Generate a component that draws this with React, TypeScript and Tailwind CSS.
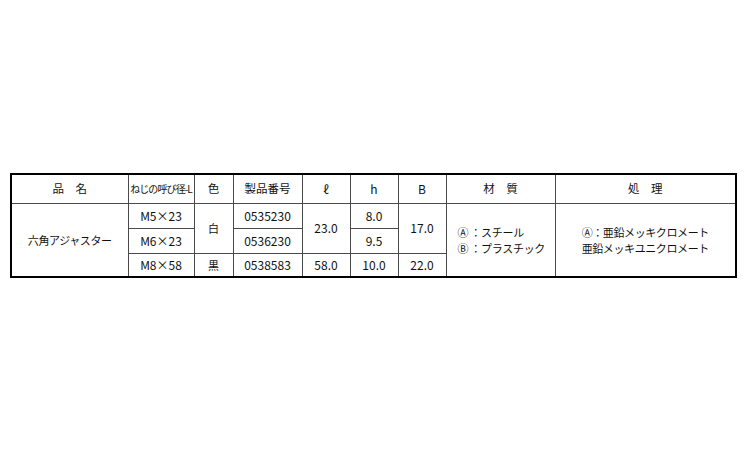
const font = { fontFamily: '"Noto Sans CJK JP", "Noto Sans", sans-serif' };

const cell = "border border-[#4a4a4a] text-center align-middle p-0 font-normal";
const num = `${cell} text-[12px]`;
const jp = `${cell} text-[11px]`;

export default function App() {
  return (
    <div className="min-h-[450px] w-[750px] bg-white pt-[173px] pl-[10px] text-[#111]" style={font}>
      <table className="table-fixed border-collapse border-2 border-black w-[727px]">
        <colgroup>
          <col className="w-[117px]" />
          <col className="w-[66px]" />
          <col className="w-[39px]" />
          <col className="w-[69px]" />
          <col className="w-[48px]" />
          <col className="w-[48px]" />
          <col className="w-[48px]" />
          <col className="w-[109px]" />
          <col className="w-[181px]" />
        </colgroup>
        <thead>
          <tr className="h-[29px]">
            <th className={`${cell} text-[11.5px]`}>品　名</th>
            <th className={`${cell} text-[10px] tracking-[-0.9px] whitespace-nowrap`}>ねじの呼び径-L</th>
            <th className={`${cell} text-[11.5px]`}>色</th>
            <th className={`${cell} text-[11.5px]`}>製品番号</th>
            <th className={num}>ℓ</th>
            <th className={num}>h</th>
            <th className={num}>B</th>
            <th className={`${cell} text-[11.5px]`}>材　質</th>
            <th className={`${cell} text-[11.5px]`}>処　理</th>
          </tr>
        </thead>
        <tbody>
          <tr className="h-[25px]">
            <td rowSpan={3} className={`${jp} tracking-[-0.4px]`}>六角アジャスター</td>
            <td className={num}>M5×23</td>
            <td rowSpan={2} className={jp}>白</td>
            <td className={num}>0535230</td>
            <td rowSpan={2} className={num}>23.0</td>
            <td className={num}>8.0</td>
            <td rowSpan={2} className={num}>17.0</td>
            <td rowSpan={3} className={`${jp} text-left pl-[11px] leading-[16px] whitespace-nowrap tracking-[-0.3px]`}>
              <div>Ⓐ ：スチール</div>
              <div>Ⓑ ：プラスチック</div>
            </td>
            <td rowSpan={3} className={`${jp} leading-[16px] whitespace-nowrap tracking-[-0.4px]`}>
              <div>Ⓐ：亜鉛メッキクロメート</div>
              <div>亜鉛メッキユニクロメート</div>
            </td>
          </tr>
          <tr className="h-[25px]">
            <td className={num}>M6×23</td>
            <td className={num}>0536230</td>
            <td className={num}>9.5</td>
          </tr>
          <tr className="h-[24px]">
            <td className={num}>M8×58</td>
            <td className={jp}>黒</td>
            <td className={num}>0538583</td>
            <td className={num}>58.0</td>
            <td className={num}>10.0</td>
            <td className={num}>22.0</td>
          </tr>
        </tbody>
      </table>
    </div>
  );
}
